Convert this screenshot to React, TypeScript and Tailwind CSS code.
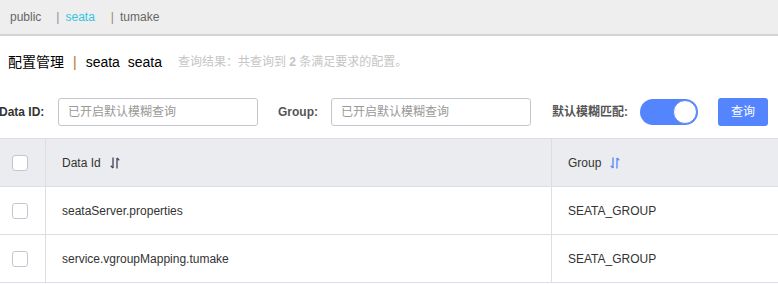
import React from "react";

const font = { fontFamily: '"Liberation Sans", "Noto Sans CJK SC", sans-serif' };

function SortIcon({ color }: { color: string }) {
  return (
    <svg width="12" height="14" viewBox="0 0 12 14" className="ml-[8px]" fill="none" stroke={color} strokeWidth="1.3">
      <path d="M4 1.5 V12" />
      <path d="M1.8 9.8 L4 12" />
      <path d="M8 12.5 V2" />
      <path d="M8 2 L10.2 4.2" />
    </svg>
  );
}

function Checkbox() {
  return <div className="w-[16px] h-[16px] border border-[#c4c6cf] rounded-[3px] bg-white" />;
}

export default function App() {
  const rows = [
    { id: "seataServer.properties", group: "SEATA_GROUP" },
    { id: "service.vgroupMapping.tumake", group: "SEATA_GROUP" },
  ];
  return (
    <div className="w-[778px] h-[284px] bg-white overflow-hidden" style={font}>
      <div className="h-[36px] bg-[#eeeeee] border-b-2 border-[#d4d4d4] flex items-center text-[12px] text-[#666] pl-[10px]">
        <span>public</span>
        <span className="ml-[15px] text-[#8b8ba7]">|</span>
        <span className="ml-[6px] text-[#33c4e0]">seata</span>
        <span className="ml-[16px] text-[#9a8a72]">|</span>
        <span className="ml-[6px]">tumake</span>
      </div>
      <div className="h-[50px] flex items-center pl-[8px] pt-[2px]">
        <span className="text-[14px] text-black">配置管理</span>
        <span className="text-[14px] text-[#b8731d] ml-[9px]">|</span>
        <span className="text-[14px] text-black ml-[9px]">seata&nbsp;&nbsp;seata</span>
        <span className="text-[12px] text-[#c5c5c5] ml-[16px]">
          查询结果：共查询到 <b className="font-bold">2</b> 条满足要求的配置。
        </span>
      </div>
      <div className="h-[52px] flex items-center">
        <span className="text-[12px] font-bold text-[#333] ml-[-1px] w-[59px]">Data ID:</span>
        <div className="w-[200px] h-[28px] border border-[#c4c6cf] rounded-[3px] flex items-center px-[9px] text-[12px] text-[#999]">
          已开启默认模糊查询
        </div>
        <span className="text-[12px] font-bold text-[#555] ml-[20px] w-[53px]">Group:</span>
        <div className="w-[200px] h-[28px] border border-[#c4c6cf] rounded-[3px] flex items-center px-[9px] text-[12px] text-[#999]">
          已开启默认模糊查询
        </div>
        <span className="text-[12px] font-bold text-[#555] ml-[21px]">默认模糊匹配:</span>
        <div className="ml-[12px] w-[58px] h-[26px] rounded-full bg-[#5584ff] flex items-center justify-end pr-[1px]">
          <div className="w-[24px] h-[24px] rounded-full bg-white border border-[#5584ff]" />
        </div>
        <div className="ml-[20px] w-[50px] h-[28px] rounded-[3px] bg-[#5584ff] text-white text-[12px] flex items-center justify-center">
          查询
        </div>
      </div>
      <div className="border-t border-[#dcdee3]">
        <div className="h-[48px] bg-[#ebecf0] flex border-b border-[#dcdee3] text-[12px] text-[#333]">
          <div className="w-[46px] border-r border-[#dcdee3] flex items-center pl-[12px]">
            <Checkbox />
          </div>
          <div className="w-[506px] border-r border-[#dcdee3] flex items-center pl-[16px]">
            Data Id <SortIcon color="#4a3f5c" />
          </div>
          <div className="flex-1 flex items-center pl-[16px]">
            Group <SortIcon color="#5584ff" />
          </div>
        </div>
        {rows.map((r) => (
          <div key={r.id} className="h-[48px] flex border-b border-[#dcdee3] text-[12px] text-[#333]">
            <div className="w-[46px] border-r border-[#dcdee3] flex items-center pl-[12px]">
              <Checkbox />
            </div>
            <div className="w-[506px] border-r border-[#dcdee3] flex items-center pl-[16px]">{r.id}</div>
            <div className="flex-1 flex items-center pl-[16px]">{r.group}</div>
          </div>
        ))}
      </div>
    </div>
  );
}
